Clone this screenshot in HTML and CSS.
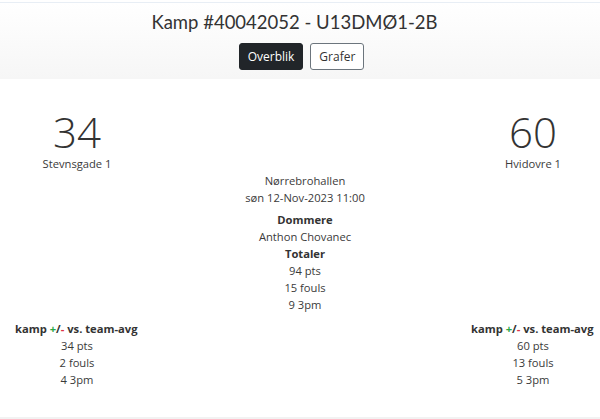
FILE: index.html
```html
<!DOCTYPE html>
<html lang="da">
<head>
    <meta charset="UTF-8">
    <meta name="viewport" content="width=device-width, initial-scale=1.0">
    <title>Kamp #40042052</title>
    <link rel="stylesheet" href="styles.css">
</head>
<body>
    <header class="page-header">
        <h1 class="page-title">Kamp #40042052 - U13DMØ1-2B</h1>
        <div class="tabs">
            <a class="tab tab-active" href="#overblik">Overblik</a>
            <a class="tab" href="#grafer">Grafer</a>
        </div>
    </header>

    <main class="match">
        <div class="match-row">
            <div class="side">
                <div class="score">34</div>
                <div class="team">Stevnsgade 1</div>
            </div>
            <div class="info">
                <div>Nørrebrohallen</div>
                <div>søn 12-Nov-2023 11:00</div>
                <div class="info-block">
                    <div class="label">Dommere</div>
                    <div>Anthon Chovanec</div>
                    <div class="label">Totaler</div>
                    <div>94 pts</div>
                    <div>15 fouls</div>
                    <div>9 3pm</div>
                </div>
            </div>
            <div class="side side-right">
                <div class="score">60</div>
                <div class="team">Hvidovre 1</div>
            </div>
        </div>

        <div class="match-row stats-row">
            <div class="side">
                <div class="stats-title">kamp <span class="plus">+</span>/<span class="minus">-</span> vs. team-avg</div>
                <div>34 pts</div>
                <div>2 fouls</div>
                <div>4 3pm</div>
            </div>
            <div class="info"></div>
            <div class="side side-right">
                <div class="stats-title">kamp <span class="plus">+</span>/<span class="minus">-</span> vs. team-avg</div>
                <div>60 pts</div>
                <div>13 fouls</div>
                <div>5 3pm</div>
            </div>
        </div>
    </main>

    <footer class="page-footer"></footer>
</body>
</html>
```

FILE: styles.css
```css
body {
    margin: 0;
    font-family: "Open Sans", sans-serif;
    font-size: 11.2px;
    line-height: 17px;
    color: #3a3a3a;
    background-color: white;
}
.page-header {
    margin-top: 2px;
    border-top: 1px solid #e8eef5;
    background: linear-gradient(#ffffff, #f6f6f6);
    padding: 8px 0 9px;
    text-align: center;
}
.page-title {
    margin: 0 0 9px;
    padding-right: 11px;
    font-family: Lato, sans-serif;
    font-size: 18.5px;
    font-weight: 400;
    line-height: 23px;
    color: #333;
}
.tabs {
    display: flex;
    justify-content: center;
    gap: 7px;
    padding-left: 3px;
}
.tab {
    display: flex;
    align-items: center;
    height: 27px;
    box-sizing: border-box;
    padding: 0 8px;
    border: 1px solid #6c757d;
    border-radius: 3px;
    font-size: 12px;
    color: #333;
    text-decoration: none;
    background: white;
}
.tab-active {
    background: #212529;
    border-color: #212529;
    color: white;
}
.match {
    padding-top: 33px;
}
.match-row {
    display: flex;
    align-items: flex-start;
}
.side {
    width: 124px;
    padding: 0 15px;
    text-align: center;
}
.side-right {
    padding: 0 5px 0 15px;
}
.info {
    flex: 1;
    padding-top: 60px;
    text-align: center;
}
.info-block {
    margin-top: 5px;
}
.label, .stats-title {
    font-weight: 700;
    color: #333;
}
.stats-title {
    white-space: nowrap;
    text-align: left;
}
.score {
    font-size: 42px;
    font-weight: 300;
    line-height: 40px;
    color: #333;
}
.team {
    margin-top: 3px;
}
.stats-row {
    margin-top: 7px;
}
.stats-row .info {
    padding-top: 0;
}
.plus {
    color: #28a745;
}
.minus {
    color: #dc3545;
}
.page-footer {
    margin-top: 29px;
    border-top: 2px solid #f2f2f2;
}
```
